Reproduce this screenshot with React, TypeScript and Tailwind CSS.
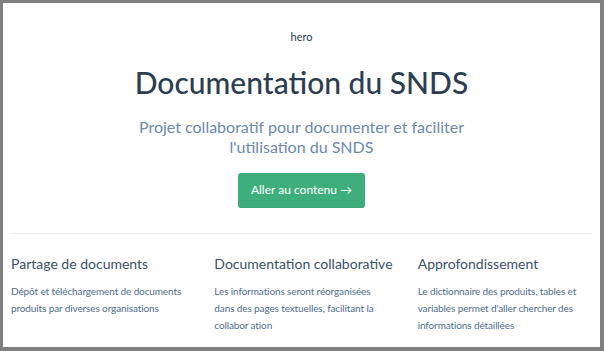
import React from 'react'

const features = [
  {
    title: 'Partage de documents',
    text: 'Dépôt et téléchargement de documents produits par diverses organisations',
  },
  {
    title: 'Documentation collaborative',
    text: 'Les informations seront réorganisées dans des pages textuelles, facilitant la collabor ation',
  },
  {
    title: 'Approfondissement',
    text: "Le dictionnaire des produits, tables et variables permet d'aller chercher des informations détaillées",
  },
]

const App: React.FC = () => {
  return (
    <div className="w-[604px] h-[351px] bg-[#808080] pl-[3px] pt-[3px] pr-[4px] pb-[4px]">
      <div
        className="h-full bg-white overflow-hidden px-[8px]"
        style={{ fontFamily: 'Lato, "Noto Sans", sans-serif' }}
      >
        <div className="flex flex-col items-center pt-[26px]">
          <p className="text-[11px] text-[#2c3e50] leading-[16px]">hero</p>
          <h1 className="mt-[17px] text-[30px] leading-[40px] font-medium text-[#2c3e50]">
            Documentation du SNDS
          </h1>
          <p className="mt-[15px] w-[330px] text-center text-[16px] leading-[20px] text-[#6a8bad]">
            Projet collaboratif pour documenter et faciliter l'utilisation du SNDS
          </p>
          <button className="mt-[16px] h-[35px] w-[127px] rounded-[3px] bg-[#3eaf7c] border-b border-[#3aa675] text-white text-[12px]">
            Aller au contenu →
          </button>
        </div>
        <div className="mt-[25px] border-t border-[#eaecef] pt-[20px] flex justify-between">
          {features.map((f) => (
            <div key={f.title} className="basis-[30%] max-w-[30%]">
              <h2 className="text-[14px] leading-[20px] whitespace-nowrap text-[#3a5169]">{f.title}</h2>
              <p className="mt-[9px] text-[10px] leading-[17px] tracking-[-0.12px] text-[#4e6e8e]">{f.text}</p>
            </div>
          ))}
        </div>
      </div>
    </div>
  )
}

export default App
